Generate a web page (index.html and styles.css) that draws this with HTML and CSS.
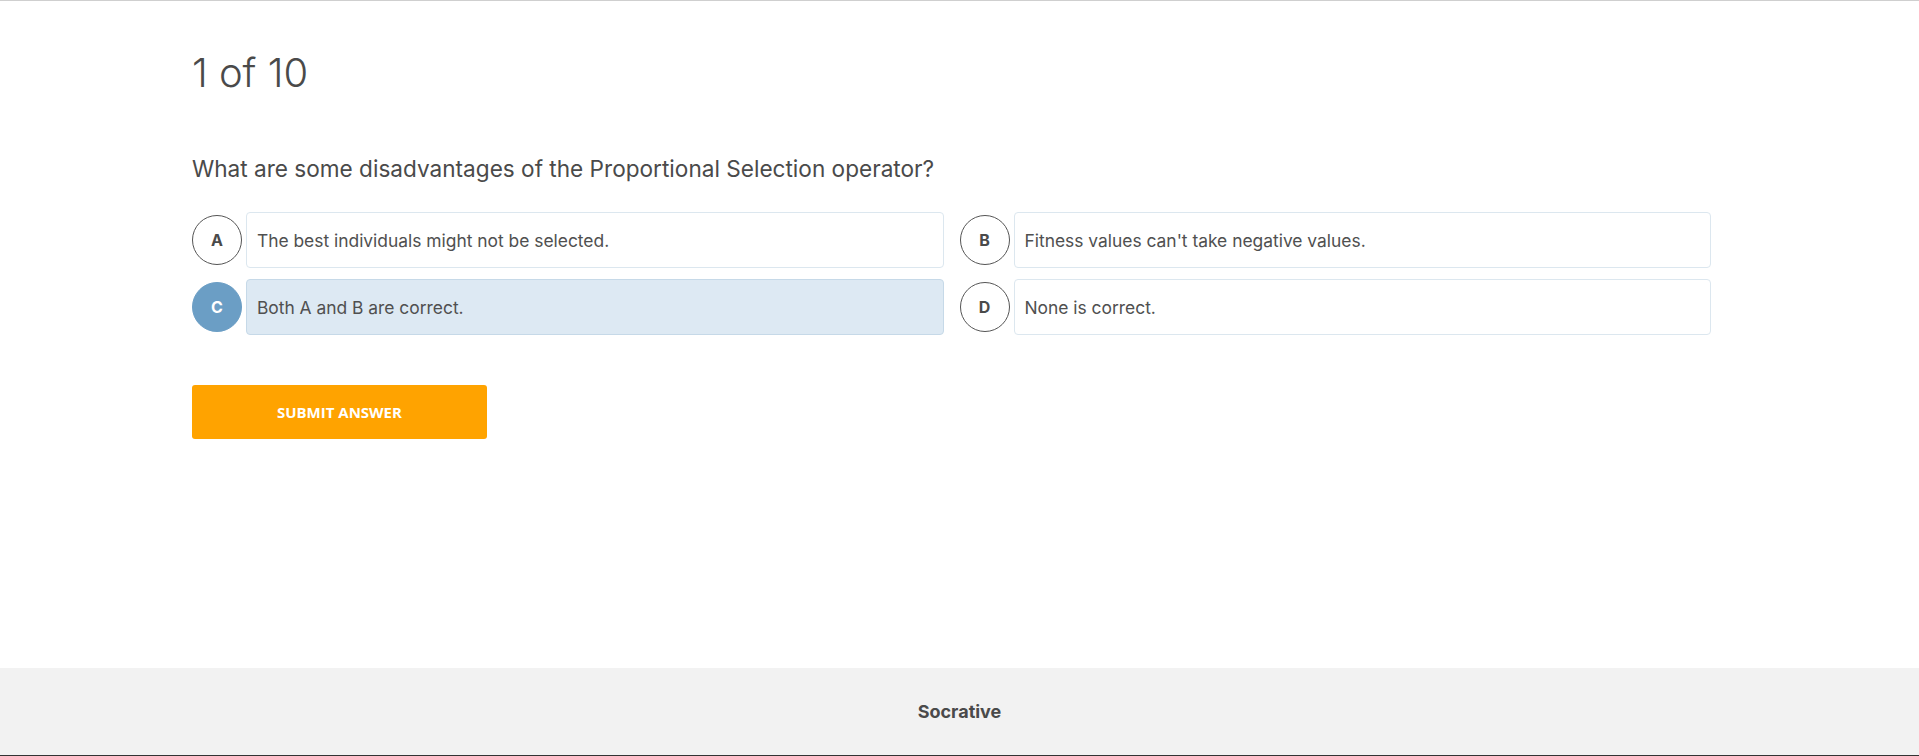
FILE: index.html
```html
<!DOCTYPE html>
<html lang="en">
<head>
<meta charset="utf-8">
<title>Socrative</title>
<link rel="stylesheet" href="styles.css">
</head>
<body>
<div class="page">
  <main class="main">
    <div class="container">
      <h1 class="counter">1 of 10</h1>
      <p class="question">What are some disadvantages of the Proportional Selection operator?</p>
      <div class="options">
        <div class="option">
          <span class="letter">A</span>
          <div class="answer">The best individuals might not be selected.</div>
        </div>
        <div class="option">
          <span class="letter">B</span>
          <div class="answer">Fitness values can't take negative values.</div>
        </div>
        <div class="option selected">
          <span class="letter">C</span>
          <div class="answer">Both A and B are correct.</div>
        </div>
        <div class="option">
          <span class="letter">D</span>
          <div class="answer">None is correct.</div>
        </div>
      </div>
      <button class="submit" type="button">SUBMIT ANSWER</button>
    </div>
  </main>
  <footer class="footer">Socrative</footer>
</div>
</body>
</html>
```

FILE: styles.css
```css
* { box-sizing: border-box; }
html, body { margin: 0; padding: 0; }
body {
  font-family: Inter, "Noto Sans", sans-serif;
  color: #4a4a4a;
  background: #fff;
}
.page {
  height: 100vh;
  display: flex;
  flex-direction: column;
  border-top: 1px solid #cfcfcf;
}
.main { flex: 1; }
.container {
  width: 80%;
  margin: 0 auto;
  padding-top: 48px;
}
.counter {
  margin: 0;
  font-size: 40px;
  font-weight: 300;
  line-height: 48px;
  color: #4a4a4a;
}
.question {
  margin: 59px 0 0;
  font-size: 22.6px;
  line-height: 26px;
  color: #4a4a4a;
}
.options {
  margin-top: 30px;
  display: grid;
  grid-template-columns: 1fr 1fr;
  row-gap: 11px;
}
.option {
  display: flex;
  align-items: center;
  gap: 4px;
  padding-right: 16px;
}
.letter {
  flex: 0 0 50px;
  width: 50px;
  height: 50px;
  border-radius: 50%;
  border: 1px solid #555;
  display: flex;
  align-items: center;
  justify-content: center;
  font-weight: 700;
  font-size: 16px;
  color: #4a4a4a;
}
.answer {
  flex: 1;
  height: 56px;
  display: flex;
  align-items: center;
  padding: 0 10px;
  border: 1px solid #dce7ef;
  border-radius: 4px;
  font-size: 17.4px;
  color: #505050;
}
.selected .letter {
  background: #6b9ec5;
  border-color: #6b9ec5;
  color: #fff;
}
.selected .answer {
  background: #dde9f3;
  border-color: #c6d9e8;
}
.submit {
  display: block;
  margin-top: 50px;
  width: 295px;
  height: 54px;
  border: none;
  border-radius: 3px;
  background: #ffa300;
  color: #fff;
  font-family: "Open Sans", sans-serif;
  font-weight: 700;
  font-size: 15px;
  cursor: pointer;
}
.footer {
  height: 88px;
  flex: 0 0 88px;
  background: #f2f2f2;
  border-bottom: 1px solid #333;
  display: flex;
  align-items: center;
  justify-content: center;
  font-weight: 700;
  font-size: 18px;
  color: #4a4a4a;
}
```
